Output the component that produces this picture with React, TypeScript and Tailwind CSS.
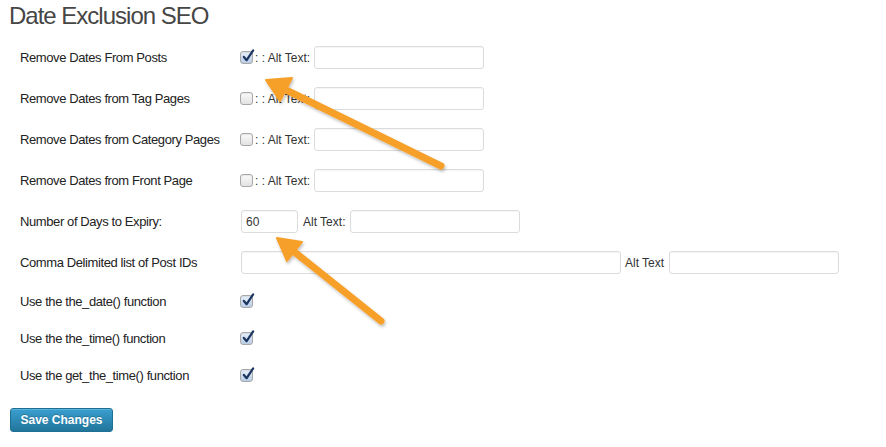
import React from "react";

const font = { fontFamily: '"Liberation Sans", Arial, Helvetica, sans-serif' };

const Checkbox = ({ checked = false }: { checked?: boolean }) => (
  <span
    className={`relative inline-block h-[13px] w-[13px] shrink-0 rounded-[3px] border border-[#a8a8a8] shadow-[inset_0_1px_1px_rgba(0,0,0,0.08)] ${
      checked
        ? "bg-gradient-to-b from-[#e8f0fa] to-[#b9cde6]"
        : "bg-gradient-to-b from-[#fbfbfb] to-[#e2e2e2]"
    }`}
  >
    {checked && (
      <svg
        viewBox="0 0 14 14"
        className="absolute left-[1px] top-[-3px] h-[14px] w-[13px]"
      >
        <path
          d="M2 8 L5 11.5 L12 1"
          fill="none"
          stroke="#1b3560"
          strokeWidth="2.4"
          strokeLinecap="round"
          strokeLinejoin="round"
        />
      </svg>
    )}
  </span>
);

const TextInput = ({ w, value = "" }: { w: string; value?: string }) => (
  <input
    type="text"
    defaultValue={value}
    className={`${w} h-[23px] rounded-[3px] border border-[#dcdcdc] bg-white px-[4px] text-[12px] text-[#333] shadow-[inset_0_1px_1px_rgba(0,0,0,0.04)] outline-none`}
    style={font}
  />
);

const Row = ({
  label,
  tall = true,
  children,
}: {
  label: string;
  tall?: boolean;
  children: React.ReactNode;
}) => (
  <div className={`flex items-center ${tall ? "h-[41px]" : "h-[37px]"}`}>
    <div className="w-[240px] pl-[20px] text-[13px] tracking-[-0.4px] text-[#222]">
      {label}
    </div>
    <div className="flex items-center">{children}</div>
  </div>
);

const AltCheckRow = ({ label, checked }: { label: string; checked?: boolean }) => (
  <Row label={label}>
    <Checkbox checked={checked} />
    <span className="ml-[2px] mr-[4px] text-[12px] text-[#333]">: : Alt Text:</span>
    <TextInput w="w-[170px]" />
  </Row>
);

const Arrows = () => (
  <svg
    className="pointer-events-none absolute left-0 top-0 h-[447px] w-[886px]"
    viewBox="0 0 886 447"
  >
    <defs>
      <filter id="sh" x="-20%" y="-20%" width="140%" height="140%">
        <feDropShadow dx="1" dy="2" stdDeviation="1.5" floodColor="#000" floodOpacity="0.25" />
      </filter>
    </defs>
    <g filter="url(#sh)" fill="#f6a02a" stroke="#f6a02a">
      <line x1="441" y1="166" x2="284" y2="89" strokeWidth="7" strokeLinecap="round" />
      <polygon points="266,80 292,78 280,101" strokeWidth="2" strokeLinejoin="round" />
      <line x1="381" y1="321" x2="292" y2="250" strokeWidth="7" strokeLinecap="round" />
      <polygon points="277,238 302,242 287,261" strokeWidth="2" strokeLinejoin="round" />
    </g>
  </svg>
);

export default function App() {
  return (
    <div className="relative h-[447px] w-[886px] overflow-hidden bg-white" style={font}>
      <div className="h-[37px] pl-[9px] pt-[1px] text-[24px] leading-[30px] tracking-[-1px] text-[#464646]">
        Date Exclusion SEO
      </div>

      <AltCheckRow label="Remove Dates From Posts" checked />
      <AltCheckRow label="Remove Dates from Tag Pages" />
      <AltCheckRow label="Remove Dates from Category Pages" />
      <AltCheckRow label="Remove Dates from Front Page" />

      <Row label="Number of Days to Expiry:">
        <span className="ml-[1px]" />
        <TextInput w="w-[57px]" value="60" />
        <span className="ml-[5px] mr-[5px] text-[12px] text-[#333]">Alt Text:</span>
        <TextInput w="w-[170px]" />
      </Row>

      <Row label="Comma Delimited list of Post IDs">
        <span className="ml-[1px]" />
        <TextInput w="w-[380px]" />
        <span className="ml-[4px] mr-[5px] text-[12px] text-[#333]">Alt Text</span>
        <TextInput w="w-[170px]" />
      </Row>

      <Row label="Use the the_date() function" tall={false}>
        <Checkbox checked />
      </Row>
      <Row label="Use the the_time() function" tall={false}>
        <Checkbox checked />
      </Row>
      <Row label="Use the get_the_time() function" tall={false}>
        <Checkbox checked />
      </Row>

      <div className="pl-[10px] pt-[13px]">
        <button
          type="button"
          className="h-[24px] w-[103px] rounded-[3px] border border-[#1f6f94] bg-gradient-to-b from-[#3a9fd0] to-[#21759b] text-[12px] font-bold text-white shadow-[inset_0_1px_0_rgba(120,200,230,0.5)] [text-shadow:0_-1px_0_rgba(0,0,0,0.2)]"
        >
          Save Changes
        </button>
      </div>

      <Arrows />
    </div>
  );
}
